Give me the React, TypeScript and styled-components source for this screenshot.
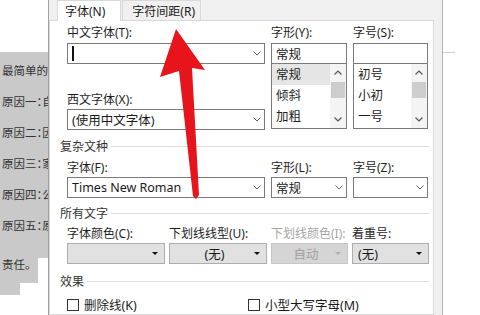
import React from 'react';
import styled, { createGlobalStyle } from 'styled-components';

const GlobalStyle = createGlobalStyle`
  *, *::before, *::after { box-sizing: border-box; }
  html, body { margin: 0; padding: 0; background: #fff; }
  body {
    font-family: "Noto Sans", "Noto Sans CJK SC", sans-serif;
    color: #1e1e1e;
  }
`;

const docLines = ['最简单的住房', '原因一：自己', '原因二：因为', '原因三：家里', '原因四：公司', '原因五：原来'];

const styleItems = ['常规', '倾斜', '加粗'];
const sizeItems = ['初号', '小初', '一号'];

export default function App() {
    return (
        <>
            <GlobalStyle />
            <Stage>
                <DocColumn>
                    <DocBlock $w={48} $h={206} $pad={3}>
                        {docLines.map((line) => (
                            <DocLine key={line} $h={31}>{line}</DocLine>
                        ))}
                    </DocBlock>
                    <DocBlock $w={38} $h={25} $pad={0}>
                        <DocLine $h={13}>责任。</DocLine>
                    </DocBlock>
                    <DocBlock $w={20} $h={12} $pad={0} />
                </DocColumn>

                <Dialog>
                    <TabStrip>
                        <Tab $active>字体(N)</Tab>
                        <Tab>字符间距(R)</Tab>
                    </TabStrip>
                    <Panel>
                        <FieldGrid $cols="198px 76px 75px" $gap={6} $mt={4}>
                            <Column>
                                <Label>中文字体(T):</Label>
                                <Input $mt={2}>
                                    <Caret />
                                    <Chevron />
                                </Input>
                                <Label $mt={28}>西文字体(X):</Label>
                                <Input $mt={1}>
                                    <InputText>(使用中文字体)</InputText>
                                    <Chevron />
                                </Input>
                            </Column>
                            <Column>
                                <Label>字形(Y):</Label>
                                <Input $mt={2}>
                                    <InputText>常规</InputText>
                                </Input>
                                <ListBox items={styleItems} selected={0} />
                            </Column>
                            <Column>
                                <Label>字号(S):</Label>
                                <Input $mt={2} />
                                <ListBox items={sizeItems} />
                            </Column>
                        </FieldGrid>

                        <SectionHeader $mt={8}>复杂文种</SectionHeader>
                        <FieldGrid $cols="198px 76px 75px" $gap={6} $mt={6}>
                            <Column>
                                <Label>字体(F):</Label>
                                <Input $mt={1}>
                                    <InputText>Times New Roman</InputText>
                                    <Chevron />
                                </Input>
                            </Column>
                            <Column>
                                <Label>字形(L):</Label>
                                <Input $mt={1}>
                                    <InputText>常规</InputText>
                                    <Chevron />
                                </Input>
                            </Column>
                            <Column>
                                <Label>字号(Z):</Label>
                                <Input $mt={1}>
                                    <InputText />
                                    <Chevron />
                                </Input>
                            </Column>
                        </FieldGrid>

                        <SectionHeader $mt={7}>所有文字</SectionHeader>
                        <FieldGrid $cols="98px 98px 77px 77px" $gap={4} $mt={5}>
                            <Column>
                                <Label>字体颜色(C):</Label>
                                <Combo>
                                    <ComboText />
                                    <Triangle />
                                </Combo>
                            </Column>
                            <Column>
                                <Label>下划线线型(U):</Label>
                                <Combo>
                                    <ComboText $center>(无)</ComboText>
                                    <Triangle />
                                </Combo>
                            </Column>
                            <Column>
                                <Label $disabled>下划线颜色(I):</Label>
                                <Combo $disabled>
                                    <ComboText $center>自动</ComboText>
                                    <Triangle $disabled />
                                </Combo>
                            </Column>
                            <Column>
                                <Label>着重号:</Label>
                                <Combo>
                                    <ComboText>(无)</ComboText>
                                    <Triangle />
                                </Combo>
                            </Column>
                        </FieldGrid>

                        <SectionHeader $mt={9}>效果</SectionHeader>
                        <CheckRow>
                            <Check><CheckBox />删除线(K)</Check>
                            <Check><CheckBox />小型大写字母(M)</Check>
                        </CheckRow>
                    </Panel>
                </Dialog>

                <PageEdge />

                <ArrowLayer viewBox="0 0 480 315">
                    <polygon
                        points="176,29 205,70 192,68 199,195 196,199 193,196 179,71 160,77"
                        fill="#e8141b"
                    />
                </ArrowLayer>
            </Stage>
        </>
    );
}

const ListBox = ({ items, selected }: { items: string[]; selected?: number }) => (
    <List>
        <ListItems>
            {items.map((item, i) => (
                <ListItem key={item} $selected={i === selected}>{item}</ListItem>
            ))}
        </ListItems>
        <ScrollTrack>
            <ScrollArrow>
                <svg width="8" height="5" viewBox="0 0 8 5">
                    <polyline points="0.5,4.5 4,1 7.5,4.5" fill="none" stroke="#555" strokeWidth="1.2" />
                </svg>
            </ScrollArrow>
            <Thumb />
            <ScrollArrow $bottom>
                <svg width="8" height="5" viewBox="0 0 8 5">
                    <polyline points="0.5,0.5 4,4 7.5,0.5" fill="none" stroke="#555" strokeWidth="1.2" />
                </svg>
            </ScrollArrow>
        </ScrollTrack>
    </List>
);

const Chevron = () => (
    <ChevronBox>
        <svg width="8" height="5" viewBox="0 0 8 5">
            <polyline points="0.5,0.5 4,4 7.5,0.5" fill="none" stroke="#666" strokeWidth="1" />
        </svg>
    </ChevronBox>
);

const Stage = styled.div`
    position: relative;
    width: 480px;
    height: 315px;
    overflow: hidden;
    display: flex;
    background: #fff;
`;

const DocColumn = styled.div`
    flex: 0 0 48px;
    display: flex;
    flex-direction: column;
    padding-top: 52px;
    font-family: "Noto Sans CJK SC", sans-serif;
    font-size: 11.5px;
    color: #333;
    font-feature-settings: "halt";
`;

const DocBlock = styled.div<{ $w: number; $h: number; $pad: number }>`
    width: ${({ $w }) => $w}px;
    height: ${({ $h }) => $h}px;
    padding-top: ${({ $pad }) => $pad}px;
    background: #c9c9c9;
    overflow: hidden;
    white-space: nowrap;
`;

const DocLine = styled.div<{ $h: number }>`
    height: ${({ $h }) => $h}px;
    line-height: ${({ $h }) => $h}px;
    padding-left: 2px;
`;

const Dialog = styled.div`
    flex: 0 0 395px;
    display: flex;
    flex-direction: column;
    background: #f0f0f0;
    border-left: 1px solid #a0a0a0;
    border-right: 1px solid #b4b4b4;
    padding-right: 8px;
`;

const PageEdge = styled.div`
    flex: 0 0 12px;
    height: 1px;
    margin-top: 52px;
    background: #d0d0d0;
`;

const TabStrip = styled.div`
    height: 20px;
    display: flex;
    align-items: flex-end;
    padding-left: 8px;
    font-size: 12px;
`;

const Tab = styled.div<{ $active?: boolean }>`
    position: relative;
    z-index: 1;
    height: ${({ $active }) => ($active ? 21 : 20)}px;
    margin-bottom: ${({ $active }) => ($active ? -1 : 0)}px;
    margin-left: ${({ $active }) => ($active ? 0 : 1)}px;
    padding: ${({ $active }) => ($active ? '0 15px 0 7px' : '0 5px 0 9px')};
    display: flex;
    align-items: center;
    background: ${({ $active }) => ($active ? '#fff' : '#f0f0f0')};
    border: 1px solid #d9d9d9;
    border-bottom: none;
    color: #1a1a1a;
`;

const Panel = styled.div`
    flex: 1;
    background: #fff;
    border: 1px solid #d9d9d9;
    padding: 0 4px 0 10px;
`;

const FieldGrid = styled.div<{ $cols: string; $gap: number; $mt: number }>`
    display: grid;
    grid-template-columns: ${({ $cols }) => $cols};
    column-gap: ${({ $gap }) => $gap}px;
    margin: ${({ $mt }) => $mt}px 0 0 7px;
`;

const Column = styled.div`
    display: flex;
    flex-direction: column;
`;

const Label = styled.div<{ $mt?: number; $disabled?: boolean }>`
    height: 16px;
    line-height: 16px;
    margin-top: ${({ $mt }) => $mt ?? 0}px;
    font-size: 12px;
    white-space: nowrap;
    color: ${({ $disabled }) => ($disabled ? '#a6a6a6' : '#1e1e1e')};
`;

const Input = styled.div<{ $mt?: number }>`
    height: 21px;
    margin-top: ${({ $mt }) => $mt ?? 0}px;
    border: 1px solid #7a7a7a;
    background: #fff;
    display: flex;
    align-items: center;
    padding: 0 3px 0 4px;
    font-size: 12.5px;
    color: #1a1a1a;
`;

const InputText = styled.span`
    flex: 1;
    white-space: nowrap;
    overflow: hidden;
`;

const Caret = styled.span`
    flex: 0 0 auto;
    width: 2px;
    height: 15px;
    background: #111;
    margin-right: auto;
`;

const ChevronBox = styled.span`
    flex: 0 0 auto;
    display: flex;
    align-items: center;
    margin-left: 4px;
`;

const List = styled.div`
    height: 65px;
    border: 1px solid #7a7a7a;
    border-top: none;
    display: flex;
    background: #fff;
`;

const ListItems = styled.div`
    flex: 1;
    display: flex;
    flex-direction: column;
`;

const ListItem = styled.div<{ $selected?: boolean }>`
    height: 21px;
    line-height: 21px;
    padding-left: 4px;
    font-size: 12.5px;
    background: ${({ $selected }) => ($selected ? '#e5e5e5' : 'transparent')};
`;

const ScrollTrack = styled.div`
    flex: 0 0 16px;
    display: flex;
    flex-direction: column;
    align-items: center;
    background: #f4f4f4;
`;

const ScrollArrow = styled.div<{ $bottom?: boolean }>`
    height: 17px;
    width: 100%;
    display: flex;
    align-items: center;
    justify-content: center;
    margin-top: ${({ $bottom }) => ($bottom ? 'auto' : '0')};
`;

const Thumb = styled.div`
    width: 14px;
    height: 16px;
    margin-top: 1px;
    background: #cdcdcd;
`;

const SectionHeader = styled.div<{ $mt: number }>`
    display: flex;
    align-items: center;
    gap: 3px;
    height: 16px;
    margin-top: ${({ $mt }) => $mt}px;
    font-size: 12px;
    color: #333;
    white-space: nowrap;
    &::after {
        content: '';
        flex: 1;
        height: 1px;
        background: #dcdcdc;
    }
`;

const Combo = styled.div<{ $disabled?: boolean }>`
    height: 21px;
    margin-top: 1px;
    display: flex;
    align-items: center;
    padding: 0 6px 0 5px;
    background: ${({ $disabled }) => ($disabled ? '#d5d5d5' : '#e1e1e1')};
    border: 1px solid ${({ $disabled }) => ($disabled ? '#c6c6c6' : '#adadad')};
    font-size: 12.5px;
    color: ${({ $disabled }) => ($disabled ? '#a0a0a0' : '#1a1a1a')};
`;

const ComboText = styled.span<{ $center?: boolean }>`
    flex: 1;
    text-align: ${({ $center }) => ($center ? 'center' : 'left')};
    white-space: nowrap;
`;

const Triangle = styled.span<{ $disabled?: boolean }>`
    flex: 0 0 auto;
    width: 0;
    height: 0;
    border-left: 3px solid transparent;
    border-right: 3px solid transparent;
    border-top: 3px solid ${({ $disabled }) => ($disabled ? '#b0b0b0' : '#111')};
`;

const CheckRow = styled.div`
    display: grid;
    grid-template-columns: 181px 1fr;
    margin: 6px 0 0 7px;
    height: 16px;
`;

const Check = styled.label`
    display: flex;
    align-items: center;
    gap: 5px;
    font-size: 12.5px;
    color: #1a1a1a;
    white-space: nowrap;
`;

const CheckBox = styled.span`
    flex: 0 0 12px;
    width: 12px;
    height: 12px;
    border: 1px solid #333;
    background: #fff;
`;

const ArrowLayer = styled.svg`
    position: absolute;
    left: 0;
    top: 0;
    width: 480px;
    height: 315px;
    pointer-events: none;
`;
